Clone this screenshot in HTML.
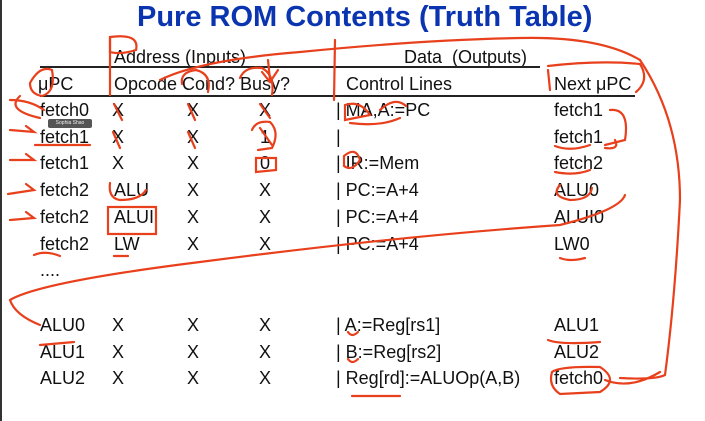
<!DOCTYPE html>
<html><head><style>
body{margin:0;width:705px;height:421px;background:#fff;position:relative;overflow:hidden;font-family:"Liberation Sans",sans-serif;}
.t{position:absolute;font-size:18px;color:#111;line-height:20px;white-space:nowrap;}
.title{position:absolute;left:137px;top:1px;font-size:29px;font-weight:bold;color:#0a34b0;white-space:nowrap;}
.ln{position:absolute;height:2px;background:#222;}
</style></head><body>
<div style="position:absolute;left:0;top:0;width:2px;height:421px;background:#333"></div>
<div class="title">Pure ROM Contents (Truth Table)</div>
<div class="t" style="left:114px;top:47px">Address (Inputs)</div>
<div class="t" style="left:404px;top:47px">Data &nbsp;(Outputs)</div>
<div class="ln" style="left:40px;top:66px;width:500px"></div>
<div class="t" style="left:38px;top:74px">μPC</div>
<div class="t" style="left:114px;top:74px">Opcode</div>
<div class="t" style="left:182px;top:74px">Cond?</div>
<div class="t" style="left:240px;top:74px">Busy?</div>
<div class="t" style="left:346px;top:74px">Control Lines</div>
<div class="t" style="left:554px;top:74px">Next μPC</div>
<div class="ln" style="left:40px;top:95px;width:595px"></div>

<div class="t" style="left:40px;top:100px">fetch0</div><div class="t" style="left:112px;top:100px">X</div><div class="t" style="left:187px;top:100px">X</div><div class="t" style="left:259px;top:100px">X</div><div class="t" style="left:336px;top:100px">| MA,A:=PC</div><div class="t" style="left:554px;top:100px">fetch1</div>
<div class="t" style="left:40px;top:127px">fetch1</div><div class="t" style="left:112px;top:127px">X</div><div class="t" style="left:187px;top:127px">X</div><div class="t" style="left:260px;top:127px">1</div><div class="t" style="left:336px;top:127px">|</div><div class="t" style="left:554px;top:127px">fetch1</div>
<div class="t" style="left:40px;top:153px">fetch1</div><div class="t" style="left:112px;top:153px">X</div><div class="t" style="left:187px;top:153px">X</div><div class="t" style="left:260px;top:153px">0</div><div class="t" style="left:336px;top:153px">| IR:=Mem</div><div class="t" style="left:554px;top:153px">fetch2</div>
<div class="t" style="left:40px;top:180px">fetch2</div><div class="t" style="left:114px;top:180px">ALU</div><div class="t" style="left:187px;top:180px">X</div><div class="t" style="left:259px;top:180px">X</div><div class="t" style="left:336px;top:180px">| PC:=A+4</div><div class="t" style="left:554px;top:180px">ALU0</div>
<div class="t" style="left:40px;top:207px">fetch2</div><div class="t" style="left:114px;top:207px">ALUI</div><div class="t" style="left:187px;top:207px">X</div><div class="t" style="left:259px;top:207px">X</div><div class="t" style="left:336px;top:207px">| PC:=A+4</div><div class="t" style="left:554px;top:207px">ALUI0</div>
<div class="t" style="left:40px;top:234px">fetch2</div><div class="t" style="left:114px;top:234px">LW</div><div class="t" style="left:187px;top:234px">X</div><div class="t" style="left:259px;top:234px">X</div><div class="t" style="left:336px;top:234px">| PC:=A+4</div><div class="t" style="left:554px;top:234px">LW0</div>
<div class="t" style="left:40px;top:260px">....</div>
<div class="t" style="left:40px;top:315px">ALU0</div><div class="t" style="left:112px;top:315px">X</div><div class="t" style="left:187px;top:315px">X</div><div class="t" style="left:259px;top:315px">X</div><div class="t" style="left:336px;top:315px">| A:=Reg[rs1]</div><div class="t" style="left:554px;top:315px">ALU1</div>
<div class="t" style="left:40px;top:342px">ALU1</div><div class="t" style="left:112px;top:342px">X</div><div class="t" style="left:187px;top:342px">X</div><div class="t" style="left:259px;top:342px">X</div><div class="t" style="left:336px;top:342px">| B:=Reg[rs2]</div><div class="t" style="left:554px;top:342px">ALU2</div>
<div class="t" style="left:40px;top:368px">ALU2</div><div class="t" style="left:112px;top:368px">X</div><div class="t" style="left:187px;top:368px">X</div><div class="t" style="left:259px;top:368px">X</div><div class="t" style="left:336px;top:368px">| Reg[rd]:=ALUOp(A,B)</div><div class="t" style="left:554px;top:368px">fetch0</div>
<div style="position:absolute;left:48px;top:119px;width:44px;height:9px;background:#555;border-radius:2px;color:#eee;font-size:5px;line-height:9px;text-align:center">Sophia Shao</div>

<svg width="705" height="421" style="position:absolute;left:0;top:0" fill="none" stroke="#e8401c" stroke-width="2.2" stroke-linecap="round">
<path d="M110 37 Q140 33 136 50 Q120 55 110 52 Z"/>
<path d="M30 83 Q40 65 52 70 Q56 92 42 96 Q30 94 30 83"/>
<path d="M160 80 Q200 60 300 52 Q420 40 520 38 Q600 36 640 60 Q680 120 680 200 Q675 300 665 375 Q655 380 620 378"/>
<path d="M182 84 Q180 72 196 70 Q212 74 208 92"/>
<path d="M240 78 Q245 66 262 68 Q275 75 272 95"/>
<path d="M268 60 L270 80 M262 72 L270 82 L278 70"/>
<path d="M335 40 L334 100 M110 38 L110 95"/>
<path d="M548 66 Q600 60 640 64 Q650 80 636 92 M548 70 L550 90"/>
<path d="M10 100 Q30 100 44 110 M20 96 Q5 110 40 118"/>
<path d="M10 130 L34 132 L26 126 M10 160 L34 160 L26 154 M8 194 L34 190 L26 184 M10 220 L34 218 L26 212"/>
<path d="M35 145 L90 145"/>
<path d="M114 104 L122 120 M113 132 L120 148 M188 104 L195 120 M188 132 L195 148 M260 104 L270 118 M260 128 L272 145"/>
<path d="M252 130 Q256 120 270 122 Q280 132 272 148 L258 150 M256 158 L276 158 L276 170 L256 172 Z"/>
<path d="M345 105 Q360 100 370 115 L345 120 Z M350 123 Q380 127 400 118 M380 110 Q395 96 406 106"/>
<path d="M344 156 Q356 146 360 160 Q352 172 344 166 Z"/>
<path d="M610 110 Q630 108 625 140 L605 145 M605 148 Q620 150 615 140"/>
<path d="M555 146 Q570 152 590 145 M555 172 Q575 176 590 170 M560 185 Q550 196 570 200 Q590 200 592 188"/>
<path d="M110 183 Q108 198 120 200 Q140 200 146 190"/>
<path d="M108 207 L156 207 L156 234 L108 234 Z"/>
<path d="M10 300 Q40 282 200 262 Q400 236 560 225 Q620 210 625 195"/>
<path d="M10 300 Q15 315 40 325"/>
<path d="M34 255 Q45 250 60 256 M114 256 L128 256 M560 258 Q570 262 585 258 M548 340 Q560 345 600 342 M40 345 L74 342 M348 332 Q352 338 358 332 M348 359 Q352 365 358 359 M352 396 L400 396"/>
<path d="M552 372 Q560 366 600 367 Q620 380 600 392 L560 394 Q548 386 552 372 M605 380 Q630 390 660 372"/>
</svg>
</body></html>
